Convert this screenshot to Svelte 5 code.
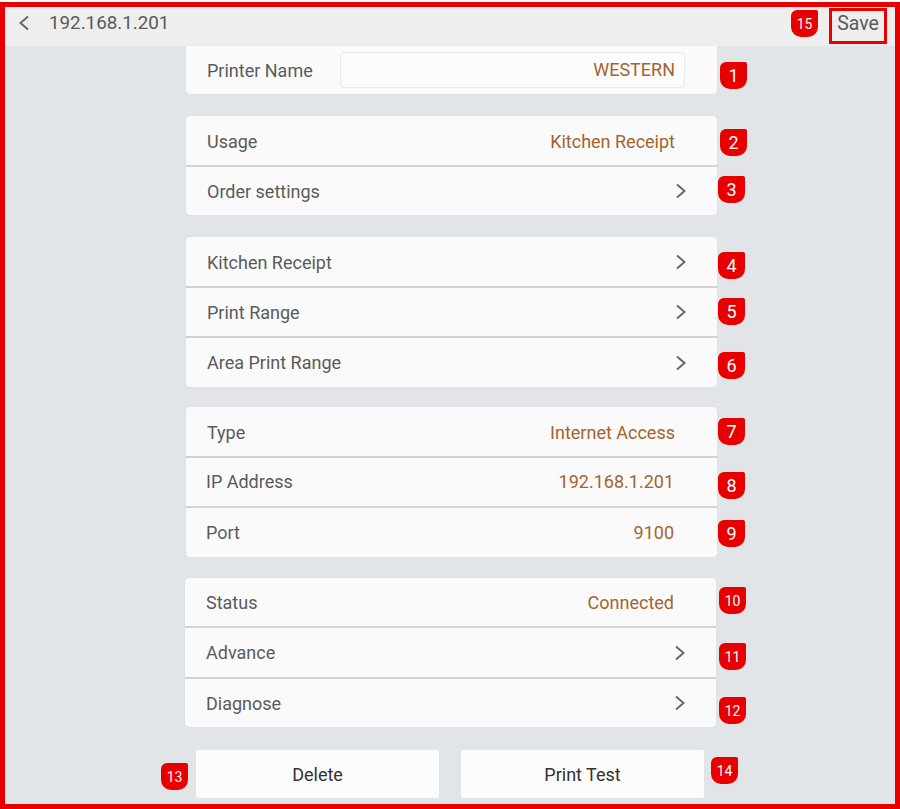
<script>
  const groups = [
    { cls: 'first', rows: [{ label: 'Printer Name', input: 'WESTERN' }] },
    { cls: 'second', rows: [{ label: 'Usage', value: 'Kitchen Receipt' }, { label: 'Order settings', arrow: true }] },
    { cls: 'third', rows: [{ label: 'Kitchen Receipt', arrow: true }, { label: 'Print Range', arrow: true }, { label: 'Area Print Range', arrow: true }] },
    { cls: 'network', rows: [{ label: 'Type', value: 'Internet Access' }, { label: 'IP Address', value: '192.168.1.201' }, { label: 'Port', value: '9100' }] },
    { cls: 'last', rows: [{ label: 'Status', value: 'Connected' }, { label: 'Advance', arrow: true }, { label: 'Diagnose', arrow: true }] }
  ];

  // callout markers, placed on the screenshot by hand
  const badges = [
    [1, 715, 55], [2, 715, 122], [3, 713, 169], [4, 713, 245], [5, 713, 291], [6, 713, 345],
    [7, 713, 411], [8, 713, 465], [9, 713, 513], [10, 714, 580], [11, 714, 636], [12, 714, 690],
    [13, 156, 756], [14, 706, 750], [15, 786, 3]
  ];
</script>

<div class="frame">
  <header class="topbar">
    <svg class="back" width="12" height="16" viewBox="0 0 12 16"><path d="M10 1.5 L2.5 8 L10 14.5" /></svg>
    <span class="title">192.168.1.201</span>
    <button class="save">Save</button>
  </header>

  <main class="content">
    {#each groups as group}
      <section class="group {group.cls ?? ''}">
        {#each group.rows as row}
          <div class="row">
            <span class="label">{row.label}</span>
            {#if row.input}
              <div class="input">{row.input}</div>
            {:else if row.value}
              <span class="value">{row.value}</span>
            {:else if row.arrow}
              <svg class="arrow" width="12" height="16" viewBox="0 0 12 16"><path d="M2 1.5 L9.5 8 L2 14.5" /></svg>
            {/if}
          </div>
        {/each}
      </section>
    {/each}

    <div class="actions">
      <button class="action">Delete</button>
      <button class="action">Print Test</button>
    </div>
  </main>

  {#each badges as [n, x, y]}
    <span class="badge" style="left: {x}px; top: {y}px">{n}</span>
  {/each}
</div>

<style>
  :global(body) {
    margin: 0;
    background: #fff;
  }

  .frame {
    position: relative;
    box-sizing: border-box;
    width: 900px;
    height: 807px;
    margin-top: 2px;
    border: 5px solid #e80000;
    background: #e1e5e8;
    font-family: Roboto, "Liberation Sans", sans-serif;
    font-size: 18px;
    color: #5a5a5a;
    overflow: hidden;
  }

  .topbar {
    display: flex;
    align-items: flex-start;
    height: 39px;
    background: #eeeeee;
    padding-left: 13px;
  }

  .back {
    margin-top: 8px;
  }

  .back path,
  .arrow path {
    fill: none;
    stroke: #666;
    stroke-width: 1.9;
  }

  .title {
    margin-left: 19px;
    margin-top: 5px;
    font-size: 18.8px;
  }

  .save {
    box-sizing: border-box;
    width: 58px;
    height: 36px;
    margin: 1px 8px 0 auto;
    padding: 0 0 5px;
    border: 3px solid #e80000;
    background: transparent;
    font: inherit;
    font-size: 19.5px;
    color: #5a5a5a;
  }

  .content {
    padding-left: 181px;
  }

  .group {
    width: 531px;
    margin-bottom: 21px;
    border-radius: 4px;
    background: #d3d3d3;
    box-shadow: 0 0 1px #cfd2d4;
  }

  .group.first {
    border-radius: 0 0 4px 4px;
    margin-bottom: 22px;
  }

  .group.second {
    margin-bottom: 22px;
  }

  .group.third {
    margin-bottom: 20.5px;
  }

  .group.last {
    margin-left: -1px;
  }

  .row {
    display: flex;
    align-items: center;
    justify-content: space-between;
    box-sizing: border-box;
    height: 48.5px;
    padding: 1px 36px 0 21px;
    background: #fafafa;
  }

  .first .row {
    height: 48px;
    padding: 0 32px 0 21px;
  }

  .row + .row {
    margin-top: 2px;
  }

  .group:not(.first) .row:first-child {
    border-radius: 4px 4px 0 0;
    padding-top: 2px;
  }

  .row:last-child {
    border-radius: 0 0 4px 4px;
  }

  .network .row + .row {
    padding: 0 37px 0 20px;
  }

  .value {
    margin-right: 6px;
    color: #a5642f;
  }

  .arrow {
    margin-right: -6px;
  }

  .input {
    box-sizing: border-box;
    width: 345px;
    height: 36px;
    line-height: 34px;
    padding-right: 9px;
    border: 1px solid #eaeaea;
    border-radius: 4px;
    background: #fcfcfc;
    color: #a5642f;
    text-align: right;
  }

  .actions {
    display: flex;
    gap: 22px;
    margin: 23px 0 0 10px;
  }

  .action {
    width: 243px;
    height: 48px;
    padding: 0;
    border: none;
    border-radius: 2px;
    background: #fcfcfc;
    font: inherit;
    color: #333;
  }

  .badge {
    position: absolute;
    box-sizing: border-box;
    display: flex;
    align-items: center;
    justify-content: center;
    width: 27px;
    height: 27px;
    border-radius: 6px 2px 10px 10px;
    background: #e80000;
    color: #fff;
    font-size: 14px;
  }

  .badge:not(:nth-last-child(-n+6)) {
    font-size: 18px;
  }
</style>
